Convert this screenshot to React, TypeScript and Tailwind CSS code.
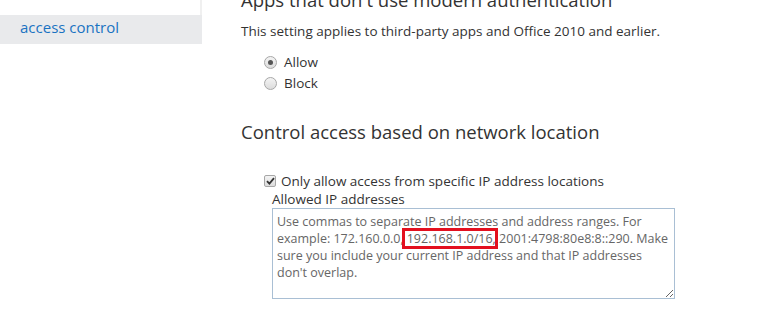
import React from "react";

const Radio: React.FC<{ checked?: boolean; label: string }> = ({ checked, label }) => (
  <label className="flex items-center gap-[7px] h-[21px]">
    <span className="w-[13px] h-[13px] rounded-full border border-[#a7a7a7] bg-gradient-to-b from-[#f4f4f4] to-[#dcdcdc] flex items-center justify-center">
      {checked && <span className="w-[5px] h-[5px] rounded-full bg-[#555]" />}
    </span>
    <span>{label}</span>
  </label>
);

const App: React.FC = () => {
  return (
    <div
      className="w-[782px] h-[326px] overflow-hidden bg-white flex text-[#333] text-[13.5px]"
      style={{ fontFamily: '"Open Sans", "Noto Sans", sans-serif' }}
    >
      {/* Sidebar */}
      <aside className="w-[202px] shrink-0">
        <div className="h-[15px] flex">
          <div className="w-[200px]" />
          <div className="w-[2px] bg-[#f0f0f0]" />
        </div>
        <div className="h-[29px] bg-[#e9eaec] pl-[20px] pb-[5px] flex items-center text-[#1a73c2] text-[15px]">
          access control
        </div>
      </aside>

      {/* Main */}
      <main className="pl-[39px] flex-1">
        <h2 className="text-[18.5px] leading-[24px] -mt-[12px]">
          Apps that don't use modern authentication
        </h2>
        <p className="mt-[9px] leading-[20px]">
          This setting applies to third-party apps and Office 2010 and earlier.
        </p>
        <div className="mt-[11px] pl-[23px]">
          <Radio checked label="Allow" />
          <Radio label="Block" />
        </div>

        <h2 className="text-[18.5px] leading-[24px] mt-[26px]">
          Control access based on network location
        </h2>

        <div className="mt-[28px] pl-[23px]">
          <label className="flex items-center gap-[5px] h-[18px]">
            <span className="w-[12px] h-[12px] border border-[#a7a7a7] bg-gradient-to-b from-[#f4f4f4] to-[#dcdcdc] rounded-[2px] flex items-center justify-center">
              <svg width="9" height="8" viewBox="0 0 9 8">
                <path d="M1 4.2 L3.4 6.6 L8 1.2" fill="none" stroke="#333" strokeWidth="1.8" />
              </svg>
            </span>
            <span>Only allow access from specific IP address locations</span>
          </label>
          <div className="pl-[8px] leading-[18px]">Allowed IP addresses</div>
          <div className="ml-[8px] w-[403px] h-[91px] border border-[#a9bfd4] px-[4px] pt-[4px] text-[12.5px] text-[#666] leading-[17px] resize overflow-auto">
            Use commas to separate IP addresses and address ranges. For example: 172.160.0.0,
            <span className="outline-[3px] outline outline-[#e3101f] -outline-offset-1 pl-[3px]">192.168.1.0/16,</span>{" "}
            2001:4798:80e8:8::290. Make sure you include your current IP address and that IP addresses don't overlap.
          </div>
        </div>
      </main>
    </div>
  );
};

export default App;
